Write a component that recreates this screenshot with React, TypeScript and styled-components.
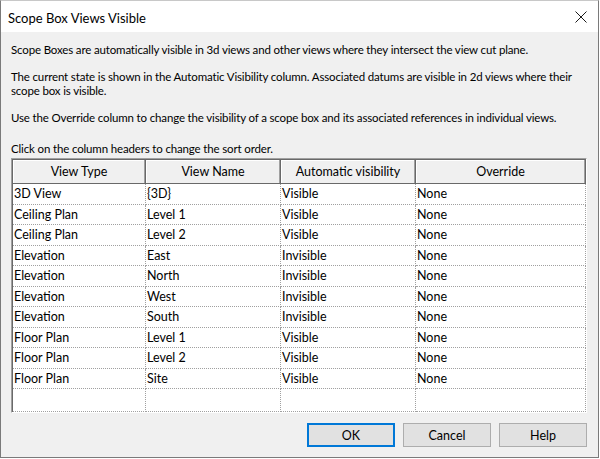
import React from "react";
import styled, { createGlobalStyle } from "styled-components";

const GlobalStyle = createGlobalStyle`
  html, body {
    margin: 0;
    padding: 0;
    background: #ffffff;
  }
  body {
    font-family: Lato, "Noto Sans", sans-serif;
    color: #000;
  }
`;

type Row = {
  viewType: string;
  viewName: string;
  auto: string;
  override: string;
};

const rows: Row[] = [
  { viewType: "3D View", viewName: "{3D}", auto: "Visible", override: "None" },
  { viewType: "Ceiling Plan", viewName: "Level 1", auto: "Visible", override: "None" },
  { viewType: "Ceiling Plan", viewName: "Level 2", auto: "Visible", override: "None" },
  { viewType: "Elevation", viewName: "East", auto: "Invisible", override: "None" },
  { viewType: "Elevation", viewName: "North", auto: "Invisible", override: "None" },
  { viewType: "Elevation", viewName: "West", auto: "Invisible", override: "None" },
  { viewType: "Elevation", viewName: "South", auto: "Invisible", override: "None" },
  { viewType: "Floor Plan", viewName: "Level 1", auto: "Visible", override: "None" },
  { viewType: "Floor Plan", viewName: "Level 2", auto: "Visible", override: "None" },
  { viewType: "Floor Plan", viewName: "Site", auto: "Visible", override: "None" },
];

const headers = ["View Type", "View Name", "Automatic visibility", "Override"];

const App = () => {
  return (
    <>
      <GlobalStyle />
      <Window>
        <TitleBar>
          <Title>Scope Box Views Visible</Title>
          <CloseButton aria-label="Close">
            <svg width="12" height="12" viewBox="0 0 12 12">
              <path d="M0.5 0.5 L11.5 11.5 M11.5 0.5 L0.5 11.5" stroke="#1a1a1a" strokeWidth="1" fill="none" />
            </svg>
          </CloseButton>
        </TitleBar>
        <Body>
          <Para>
            Scope Boxes are automatically visible in 3d views and other views where they intersect the view cut plane.
          </Para>
          <Para>
            The current state is shown in the Automatic Visibility column. Associated datums are visible in 2d views where their
            <br />
            scope box is visible.
          </Para>
          <Para $gap={17}>
            Use the Override column to change the visibility of a scope box and its associated references in individual views.
          </Para>
          <Para $gap={2}>Click on the column headers to change the sort order.</Para>
          <Grid>
            <HeaderRow>
              {headers.map((h) => (
                <HeaderCell key={h}>{h}</HeaderCell>
              ))}
            </HeaderRow>
            {rows.map((r, i) => (
              <DataRow key={i}>
                <Cell>{r.viewType}</Cell>
                <Cell>{r.viewName}</Cell>
                <Cell>{r.auto}</Cell>
                <Cell>{r.override}</Cell>
              </DataRow>
            ))}
            <DataRow $empty>
              <Cell />
              <Cell />
              <Cell />
              <Cell />
            </DataRow>
          </Grid>
          <Buttons>
            <Button $default>OK</Button>
            <Button>Cancel</Button>
            <Button>Help</Button>
          </Buttons>
        </Body>
      </Window>
    </>
  );
};

export default App;

const Window = styled.div`
  width: 599px;
  height: 458px;
  box-sizing: border-box;
  border: 1px solid #7a7a7a;
  border-top-color: #c8c8c8;
  background: #f0f0f0;
  display: flex;
  flex-direction: column;
`;

const TitleBar = styled.div`
  height: 31px;
  background: #ffffff;
  display: flex;
  align-items: center;
  justify-content: space-between;
  padding-left: 7px;
  padding-right: 10px;
  flex-shrink: 0;
`;

const Title = styled.span`
  font-size: 13px;
  color: #000;
  margin-top: 2px;
`;

const CloseButton = styled.div`
  width: 14px;
  height: 14px;
  display: flex;
  align-items: center;
  justify-content: center;
  margin-top: 1px;
`;

const Body = styled.div`
  flex: 1;
  display: flex;
  flex-direction: column;
  padding: 11px 11px 0 10px;
`;

const Para = styled.p<{ $gap?: number }>`
  margin: 0 0 ${(p) => p.$gap ?? 13}px 0;
  font-size: 11.5px;
  letter-spacing: -0.15px;
  line-height: 14px;
  white-space: nowrap;
  color: #000;
`;

const Grid = styled.div`
  display: flex;
  flex-direction: column;
  background: #ffffff;
  border-top: 1px solid #a0a0a0;
  border-left: 1px solid #a0a0a0;
  border-right: 1px solid #ffffff;
  border-bottom: 1px solid #ffffff;
  box-shadow: inset 1px 1px 0 #696969;
  padding: 1px 0 0 1px;
`;

const columns = "133px 135px 135px 1fr";

const HeaderRow = styled.div`
  display: grid;
  grid-template-columns: ${columns};
  height: 24px;
  background: #f0f0f0;
`;

const HeaderCell = styled.div`
  display: flex;
  align-items: center;
  justify-content: center;
  font-size: 12.5px;
  color: #000;
  border-bottom: 1px solid #696969;
  border-right: 1px solid #696969;
  box-shadow: inset -1px 0 0 #a0a0a0, inset 1px 1px 0 #ffffff;
`;

const DataRow = styled.div<{ $empty?: boolean }>`
  display: grid;
  grid-template-columns: ${columns};
  height: ${(p) => (p.$empty ? "23px" : "20.5px")};
`;

const Cell = styled.div`
  display: flex;
  align-items: center;
  padding-left: 1px;
  font-size: 12.5px;
  color: #000;
  white-space: nowrap;
  overflow: hidden;
  border-right: 1px dotted #a0a0a0;
  border-bottom: 1px dotted #a0a0a0;
`;

const Buttons = styled.div`
  display: flex;
  justify-content: flex-end;
  gap: 8px;
  margin-top: 10px;
`;

const Button = styled.button<{ $default?: boolean }>`
  width: 88px;
  height: 24px;
  box-sizing: border-box;
  background: #e1e1e1;
  border: ${(p) => (p.$default ? "2px solid #0078d7" : "1px solid #adadad")};
  font-family: Lato, "Noto Sans", sans-serif;
  font-size: 12.5px;
  color: #000;
  padding: 0;
`;
